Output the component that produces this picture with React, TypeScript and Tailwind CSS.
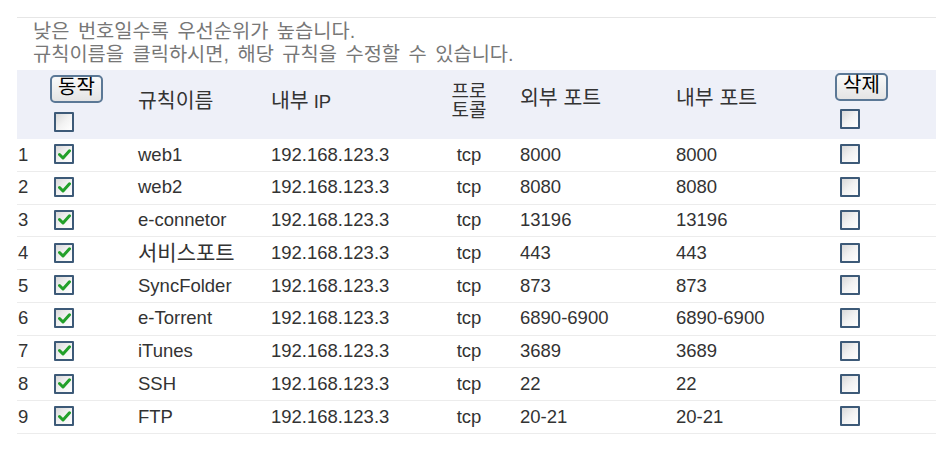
import React from 'react';

type Rule = {
  name: string;
  ip: string;
  proto: string;
  ext: string;
  int: string;
};

const rules: Rule[] = [
  { name: 'web1', ip: '192.168.123.3', proto: 'tcp', ext: '8000', int: '8000' },
  { name: 'web2', ip: '192.168.123.3', proto: 'tcp', ext: '8080', int: '8080' },
  { name: 'e-connetor', ip: '192.168.123.3', proto: 'tcp', ext: '13196', int: '13196' },
  { name: '서비스포트', ip: '192.168.123.3', proto: 'tcp', ext: '443', int: '443' },
  { name: 'SyncFolder', ip: '192.168.123.3', proto: 'tcp', ext: '873', int: '873' },
  { name: 'e-Torrent', ip: '192.168.123.3', proto: 'tcp', ext: '6890-6900', int: '6890-6900' },
  { name: 'iTunes', ip: '192.168.123.3', proto: 'tcp', ext: '3689', int: '3689' },
  { name: 'SSH', ip: '192.168.123.3', proto: 'tcp', ext: '22', int: '22' },
  { name: 'FTP', ip: '192.168.123.3', proto: 'tcp', ext: '20-21', int: '20-21' },
];

const cols = 'grid grid-cols-[33px_88px_133px_170px_56px_179px_158px_1fr]';

const isKorean = (s: string) => /[\uac00-\ud7a3]/.test(s);

function Checkbox({ checked = false }: { checked?: boolean }) {
  return (
    <div className="w-[20px] h-[20px] border-2 border-[#3d5a78] rounded-[1px] bg-gradient-to-br from-[#d9d9d9] via-[#f2f2f2] to-white flex items-center justify-center">
      {checked && (
        <svg width="13" height="11" viewBox="0 0 13 11">
          <path d="M1.5 5.5 L5 9 L11.5 1.8" fill="none" stroke="#22a02a" strokeWidth="3" strokeLinecap="round" strokeLinejoin="round" />
        </svg>
      )}
    </div>
  );
}

function Button({ label }: { label: string }) {
  return (
    <button className="h-[28px] px-[6px] border-2 border-[#5b7896] rounded-[5px] bg-gradient-to-b from-[#fafafa] to-[#e4e4e4] text-[20px] leading-none text-black pb-[4px]">
      {label}
    </button>
  );
}

export default function App() {
  return (
    <div
      className="w-[936px] h-[464px] bg-white overflow-hidden text-[#333] pt-[17px] pl-[17px]"
      style={{ fontFamily: '"Liberation Sans", "Noto Sans CJK KR", sans-serif' }}
    >
      <div className="border-t border-[#e6e6e6]">
        {/* notice */}
        <div className="pl-[16px] pt-[2px] text-[19.8px] leading-[23px] text-[#777] [word-spacing:3px] h-[52px]">
          <p>낮은 번호일수록 우선순위가 높습니다.</p>
          <p>규칙이름을 클릭하시면, 해당 규칙을 수정할 수 있습니다.</p>
        </div>

        {/* header */}
        <div className={`${cols} h-[69px] bg-[#eef0f8] text-[20.5px]`}>
          <div />
          <div className="flex flex-col items-start pt-[5px] gap-[9px]">
            <Button label="동작" />
            <div className="pl-[4px]">
              <Checkbox />
            </div>
          </div>
          <div className="flex items-center pb-[6px]">규칙이름</div>
          <div className="flex items-center pb-[6px]">
            내부 <span className="text-[18.5px] ml-[5px]">IP</span>
          </div>
          <div className="flex flex-col items-center justify-center text-[19px] leading-[19px] pb-[8px]">
            <span>프로</span>
            <span>토콜</span>
          </div>
          <div className="flex items-center pl-[23px] pb-[12px]">외부 포트</div>
          <div className="flex items-center pb-[12px]">내부 포트</div>
          <div className="flex flex-col items-start pt-[3px] gap-[8px] pl-[1px]">
            <Button label="삭제" />
            <div className="pl-[5px]">
              <Checkbox />
            </div>
          </div>
        </div>

        {/* rows */}
        {rules.map((r, i) => (
          <div
            key={i}
            className={`${cols} h-[32.75px] items-center border-b border-[#ececec] text-[18.5px] pb-[1px]`}
          >
            <div className="pl-[1px]">{i + 1}</div>
            <div className="pl-[4px]">
              <Checkbox checked />
            </div>
            <div className={isKorean(r.name) ? 'text-[21px] leading-none' : ''}>{r.name}</div>
            <div>{r.ip}</div>
            <div className="text-center">{r.proto}</div>
            <div className="pl-[23px]">{r.ext}</div>
            <div>{r.int}</div>
            <div className="pl-[6px]">
              <Checkbox />
            </div>
          </div>
        ))}
      </div>
    </div>
  );
}
